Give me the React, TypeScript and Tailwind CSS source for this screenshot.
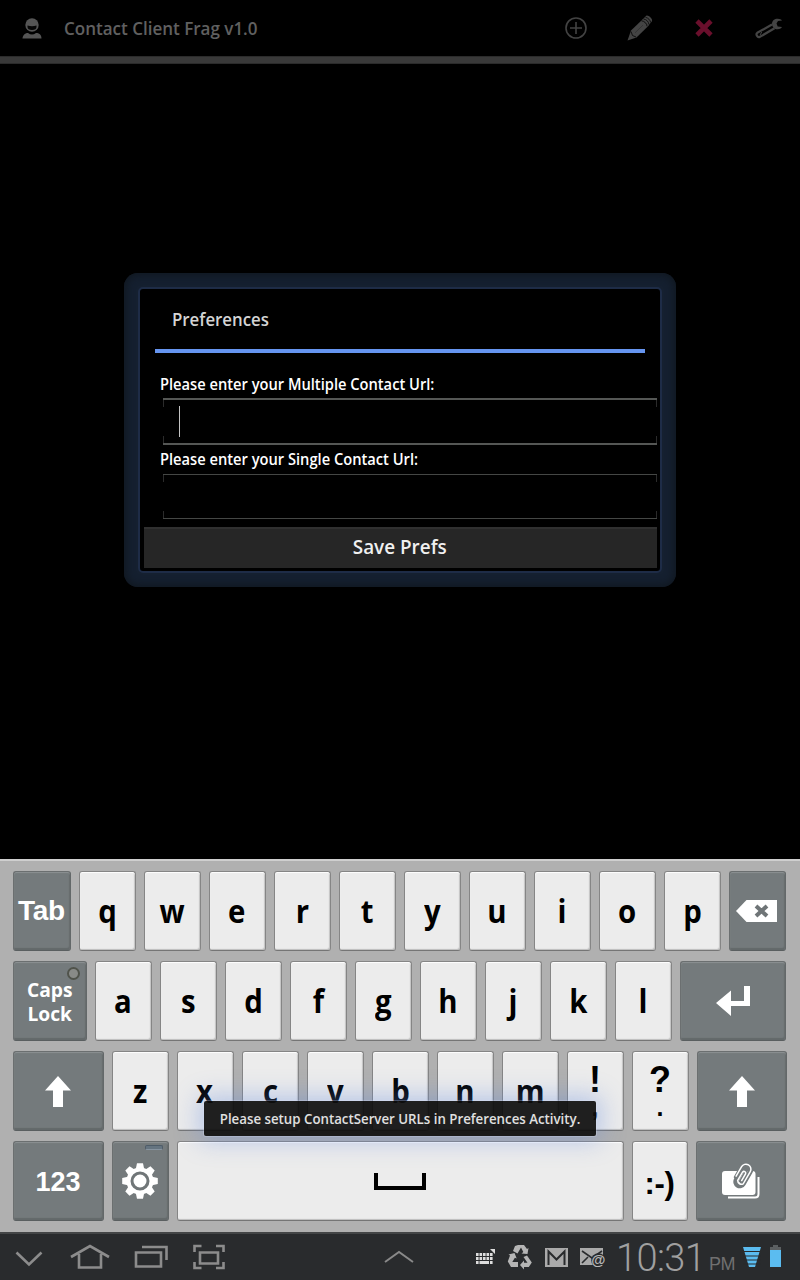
import type { ReactNode } from "react";

const droid = "font-['Open_Sans','Noto_Sans',sans-serif]";
const helv = "font-['Liberation_Sans',Arial,sans-serif]";

function Key({ children, width = "w-[57px]", dark = false }: { children?: ReactNode; width?: string; dark?: boolean }) {
  const tone = dark
    ? "bg-[#747a7c] border-[#6b6f70] border-b-[#5a5f60] border-r-[#636869] text-white shadow-[inset_0_1px_1px_#8c9193,inset_-1px_-2px_1px_#63696a]"
    : "bg-[#ececec] border-[#858585] border-b-[#757575] text-black shadow-[inset_0_1px_1px_#ffffff,inset_-1px_-1px_1px_#bdbdbd]";
  return (
    <div className={`relative flex h-20 shrink-0 items-center justify-center rounded-[3px] border pr-px ${width} ${tone}`}>
      {children}
    </div>
  );
}

function Letter({ children }: { children: string }) {
  return (
    <Key>
      <span className={`${droid} mb-[2px] inline-block scale-x-[0.89] text-[33px] leading-none font-bold`}>{children}</span>
    </Key>
  );
}

function Shift() {
  return (
    <svg width="26" height="31" viewBox="0 0 26 31" fill="white">
      <path d="M13 0 26 14.500H18V31H8V14.500H0Z" />
    </svg>
  );
}

function PersonIcon() {
  return (
    <svg width="20" height="21" viewBox="0 0 20 21">
      <circle cx="10" cy="7" r="6.700" fill="#555" />
      <path d="M5.500 7.600q4.500 1.500 9 0v1.500a4.500 3 0 0 1-9 0Z" fill="#060606" />
      <path d="M0.500 20.500c.5-4 3-5.500 5.500-5.500q4 3 8 0c3 0 5.500 1.500 5.500 5.500Z" fill="#555" />
    </svg>
  );
}

function AddIcon() {
  return (
    <svg width="22" height="22" viewBox="0 0 22 22" fill="none" stroke="#434343" strokeWidth="1.600">
      <circle cx="11" cy="11" r="10" />
      <path d="M11 5v12M5 11h12" />
    </svg>
  );
}

function PencilIcon() {
  return (
    <svg width="26" height="26" viewBox="0 0 26 26" fill="#444">
      <path d="M.5 25.500 4 15.500 15.500 4.500l6.300 6L9.500 22.500Z" />
      <path d="m15 5 4-4c2-1.800 7.500 3.300 5.700 5.600L21.500 10.500Z" />
      <path d="m4 16.500 1.500 4L9 22M14.500 5.800c3 .4 5.200 2.600 5.600 5.500M16.500 4c3 .4 5 2.500 5.500 5.500M18.500 2.300c2.800.7 4.600 2.600 5.200 5.200" fill="none" stroke="#0a0a0a" strokeWidth=".9" />
      <path d="m8 17.800 8-7.700" stroke="#303030" strokeWidth=".8" />
    </svg>
  );
}

function WrenchIcon() {
  return (
    <svg width="28" height="21" viewBox="0 0 28 21" fill="none" stroke="#444" strokeLinejoin="round">
      <path d="M17 6.500 2.300 14.800C.5 16 2.300 20 4.800 18.900L19.500 10.300" strokeWidth="2.200" />
      <path d="M26 1.600C22-.5 17 1.500 17 5.800c0 4.800 5 7 9 4.500l1-1.300-4.300-.6-1.200-3L23 3l4-.6Z" fill="#444" stroke="none" />
      <path d="M5 17.200 6.700 14" strokeWidth="1" />
    </svg>
  );
}

function Header() {
  return (
    <header className="flex h-[64px] flex-col bg-black">
      <div className="flex h-14 items-center pl-[22px] pr-[17px]">
        <PersonIcon />
        <h1 className={`${droid} ml-[22px] w-[200px] origin-left scale-x-[0.945] text-[18px] font-semibold whitespace-nowrap text-[#606060]`}>Contact Client Frag v1.0</h1>
        <div className="ml-auto flex items-center">
          <AddIcon />
          <span className="ml-10"><PencilIcon /></span>
          <svg className="ml-[42px]" width="18" height="18" viewBox="0 0 18 18" stroke="#6a0f2c" strokeWidth="4.600">
            <path d="m2 2 14 14M16 2 2 16" />
          </svg>
          <span className="ml-[42px]"><WrenchIcon /></span>
        </div>
      </div>
      <div className="h-2 border-y border-[#2b2b2b] bg-[#393939]" />
    </header>
  );
}

function Field({ focused = false }: { focused?: boolean }) {
  const line = focused ? "h-[2px] bg-[#555755]" : "h-px bg-[#454745]";
  return (
    <div className={`ml-[23px] flex w-[494px] shrink-0 flex-col justify-between ${focused ? "h-[47px]" : "h-[45px]"}`}>
      <div>
        <div className={line} />
        <div className="h-[7px] border-x border-[#2b2b2b]" />
      </div>
      {focused && <div className="-my-1 ml-4 h-[31px] w-px bg-[#c4c4c4]" />}
      <div>
        <div className="h-[7px] border-x border-[#2b2b2b]" />
        <div className={line} />
      </div>
    </div>
  );
}

function Dialog() {
  return (
    <section className="mx-auto h-[314px] w-[552px] rounded-[14px] bg-[#152030] p-[14px] shadow-[inset_0_0_8px_2px_#10171f]">
      <div className={`${droid} flex h-[286px] w-[524px] flex-col rounded-[5px] border-2 border-[#1e2c47] bg-black text-white`}>
        <h2 className="ml-[31.5px] mt-[17px] h-[27px] origin-left scale-x-[0.935] text-[18px] leading-[27px] font-semibold text-[#d4d4d4]">Preferences</h2>
        <div className="ml-[15px] mt-4 h-1 w-[490px] bg-[#6695f0]" />
        <label className="ml-[19.5px] mt-[20px] h-[25px] origin-left scale-x-[0.917] text-[16px] leading-[22px] font-semibold whitespace-nowrap">Please enter your Multiple Contact Url:</label>
        <Field focused />
        <label className="ml-[19.5px] mt-[3px] h-[26px] origin-left scale-x-[0.917] text-[16px] leading-[22px] font-semibold whitespace-nowrap">Please enter your Single Contact Url:</label>
        <Field />
        <button className="ml-1 mt-[8px] flex h-[41px] w-[513px] shrink-0 items-center justify-center border-t-2 border-t-[#303030] bg-[#262626] pb-[3px] pr-[2px] text-[20px] font-semibold text-[#f0f0f0]">
          <span className="inline-block scale-x-[0.945]">Save Prefs</span>
        </button>
      </div>
    </section>
  );
}

function Backspace() {
  return (
    <svg width="42" height="22" viewBox="0 0 42 22">
      <path d="M0 11 10.500 0H41v22H10.500Z" fill="white" />
      <path d="m20 6 11 10M31 6 20 16" stroke="#6f7577" strokeWidth="4" />
    </svg>
  );
}

function Gear() {
  return (
    <svg width="36" height="36" viewBox="-18 -18 36 36" fill="white">
      <circle r="13.500" />
      {[0, 45, 90, 135].map((a) => (
        <path key={a} transform={`rotate(${a})`} d="M-4.200-12-3-17.800H3L4.200-12V12L3 17.800H-3L-4.200 12Z" />
      ))}
      <circle r="8" fill="none" stroke="#707678" strokeWidth="3" />
    </svg>
  );
}

function Clip() {
  return (
    <svg width="40" height="36" viewBox="0 0 40 36" fill="none">
      <path d="M7 34.500h27q3.500 0 3.500-3.500V14" stroke="white" strokeWidth="2" />
      <rect x="1" y="8" width="33.500" height="24" rx="3" fill="white" />
      <g transform="rotate(30 21 12)" strokeLinecap="round">
        <path d="M16.500 9V5.500a5 5 0 0 1 10 0V19a4 4 0 0 1-8 0V9" stroke="#757b7d" strokeWidth="5" />
        <path d="M16.500 17V5a5 5 0 0 1 10 0V19a3.800 3.800 0 0 1-7.500 0V8.500a2 2 0 0 1 4 0V18" stroke="#757b7d" strokeWidth="3.500" />
        <path d="M16.500 16V5a5 5 0 0 1 10 0V19a3.800 3.800 0 0 1-6.500 0V9a1.800 1.800 0 0 1 3.500 0V17" stroke="white" strokeWidth="1.500" />
      </g>
    </svg>
  );
}

function Keyboard() {
  return (
    <section className="relative flex h-[373px] flex-col gap-[10px] border-t-2 border-t-[#cfcfcf] bg-[#b0b0b0] pl-[13px] pt-[10px]">
      <div className="flex gap-2">
        <Key dark width="w-[58px]"><span className={`${helv} text-[28px] leading-none font-bold tracking-[-0.3px]`}>Tab</span></Key>
        {[..."qwertyuiop"].map((c) => <Letter key={c}>{c}</Letter>)}
        <Key dark><Backspace /></Key>
      </div>
      <div className="flex gap-2">
        <Key dark width="w-[74px]">
          <span className={`${droid} mt-[2px] inline-block scale-x-[0.96] text-center text-[20px] leading-6 font-bold`}>Caps<br />Lock</span>
          <i className="absolute right-[6px] top-[5px] h-[13px] w-[13px] rounded-full border-2 border-[#50534b] bg-[#898b88]" />
        </Key>
        {[..."asdfghjkl"].map((c) => <Letter key={c}>{c}</Letter>)}
        <Key dark width="w-[106px]">
          <svg width="34" height="30" viewBox="0 0 34 30" fill="white"><path d="M0 17 15 4.500V15H28V0h6v20H15v10Z" /></svg>
        </Key>
      </div>
      <div className="flex gap-2">
        <Key dark width="w-[91px]"><Shift /></Key>
        {[..."zxcvbnm"].map((c) => <Letter key={c}>{c}</Letter>)}
        {["!,", "?."].map((p) => (
          <Key key={p}>
            <span className={`${helv} mt-[2px] flex flex-col items-center font-bold`}>
              <span className="h-[38px] text-[36px] leading-[38px]">{p[0]}</span>
              <span className="h-6 text-[25px] leading-[16px]">{p[1]}</span>
            </span>
          </Key>
        ))}
        <Key dark width="w-[90px]"><Shift /></Key>
      </div>
      <div className="flex gap-2">
        <Key dark width="w-[91px]"><span className={`${helv} mt-[2px] text-[27px] leading-none font-bold`}>123</span></Key>
        <Key dark>
          <Gear />
          <i className="absolute right-[5px] top-[3px] h-[5px] w-[18px] rounded-[2px] border border-[#4e5c68] border-b-[#8794a0] bg-[#657480]" />
        </Key>
        <Key width="w-[447px]"><i className="block h-[17px] w-[52px] border-4 border-t-0 border-black" /></Key>
        <Key width="w-[56px]"><span className={`${helv} mt-1 text-[31px] leading-none font-bold tracking-[-0.3px]`}>:-)</span></Key>
        <Key dark width="w-[90px]"><Clip /></Key>
      </div>
      <div className={`${droid} absolute left-[204px] top-[240px] flex h-[35px] w-[392px] items-center justify-center rounded-[2px] bg-[#0d0d0d]/92 text-[14.5px] font-semibold whitespace-nowrap text-[#e0e0e0] shadow-[0_0_24px_5px_rgba(95,135,220,0.38),0_0_0_1px_rgba(255,255,255,0.25)]`}>
        <span className="inline-block scale-x-[0.915]">Please setup ContactServer URLs in Preferences Activity.</span>
      </div>
    </section>
  );
}

function StatusBar() {
  return (
    <footer className="flex h-12 items-center border-t-2 border-t-[#434546] bg-[#292b2d]">
      <svg width="230" height="46" viewBox="0 0 230 46" fill="none" stroke="#8c8c8c" strokeWidth="2.600">
        <path d="m16.500 18.500 12.500 12 12.500-12" />
        <path d="m71 23 19-11L109 23M79 20v13.500h22V20" />
        <path d="M136 18.500h25V32.500h-25ZM142 13h24.500v13" />
        <path d="M200 18.500h18V29.500h-18ZM194.500 18v-6h7M216 12h7.500v6M194.500 28v6h7M216 34h7.500v-6" />
      </svg>
      <svg className="ml-[154px]" width="30" height="14" viewBox="0 0 30 14" fill="none" stroke="#898989" strokeWidth="2">
        <path d="M1 12 15 2l14 10" />
      </svg>
      <svg className="ml-[62px]" width="19" height="16" viewBox="0 0 19 16" fill="#ddd">
        {[0, 1, 2, 3, 4].map((x) => [0, 1].map((y) => <rect key={`${x}${y}`} x={x * 3.5} y={4 + y * 4} width="2.600" height="3" />))}
        <path d="M0 12h2.600v3H0ZM3.500 12h9.500v3H3.500ZM14 12h2.600v3H14ZM14 0h5v5Z" />
      </svg>
      <svg className="ml-[12px]" width="26" height="26" viewBox="0 0 26 26" fill="#b5b5b5">
        <path d="m8 2 3-1h6l3 4 1.500-1-1 6-6-.5 1.800-1.400L14 3.500 10.500 9.500 6 7Z" />
        <path d="m20 11.500 4.800 7-3 4.500H17v2.500L13 21l4-4.500v2.300h3.500L16.500 13Z" />
        <path d="M3 11.500 1.500 10.500 7.500 9l2.200 5.500-1.800-.8L5.300 18H11v5H4L.8 17.500Z" />
      </svg>
      <svg className="ml-[12px] mt-px" width="23" height="19" viewBox="0 0 23 19">
        <path d="M0 0h23v19H0Z" fill="#aaa" />
        <path d="M3.500 17V3.500l8 8 8-8V17" fill="none" stroke="#292b2d" strokeWidth="2" />
      </svg>
      <svg className="ml-[12px] mt-px" width="26" height="20" viewBox="0 0 26 20">
        <path d="M0 0h23v17H0Z" fill="#aaa" />
        <path d="m2 3 10 7 10-7M2 15l6-6" fill="none" stroke="#292b2d" strokeWidth="1.600" />
        <circle cx="18.500" cy="12.500" r="7.300" fill="#292b2d" />
        <text x="11.200" y="17" fontSize="14.500" fontWeight="700" fontFamily="Liberation Sans, sans-serif" fill="#b8b8b8">@</text>
      </svg>
      <span className="ml-[10px] mt-[2px] w-[89px] font-['Roboto',sans-serif] text-[38px] leading-none font-light whitespace-nowrap tracking-[-0.6px] text-[#a0a0a0]">10:31</span>
      <span className={`${helv} ml-1 mt-[13px] text-[18px] leading-none tracking-[-0.5px] text-[#707070]`}>PM</span>
      <svg className="ml-[8px]" width="18" height="20" viewBox="0 0 18 20">
        <path d="M0 0h18L12 20H6Z" fill="#5bbcf0" />
        <path d="M0 4.500h18M0 9h18M0 13h18M0 17h18" stroke="#292b2d" strokeWidth="1" />
      </svg>
      <svg className="-mt-[2px] ml-[9px]" width="12" height="22" viewBox="0 0 12 22">
        <path d="M3 0h5v2h3v5H0V2h3Z" fill="#5b5f61" />
        <path d="M0 5h11v17H0Z" fill="#5bbcf0" />
      </svg>
    </footer>
  );
}

export default function App() {
  return (
    <main className="flex h-[1280px] w-[800px] flex-col overflow-hidden bg-black">
      <Header />
      <div className="h-[795px] pt-[209px]"><Dialog /></div>
      <Keyboard />
      <StatusBar />
    </main>
  );
}
